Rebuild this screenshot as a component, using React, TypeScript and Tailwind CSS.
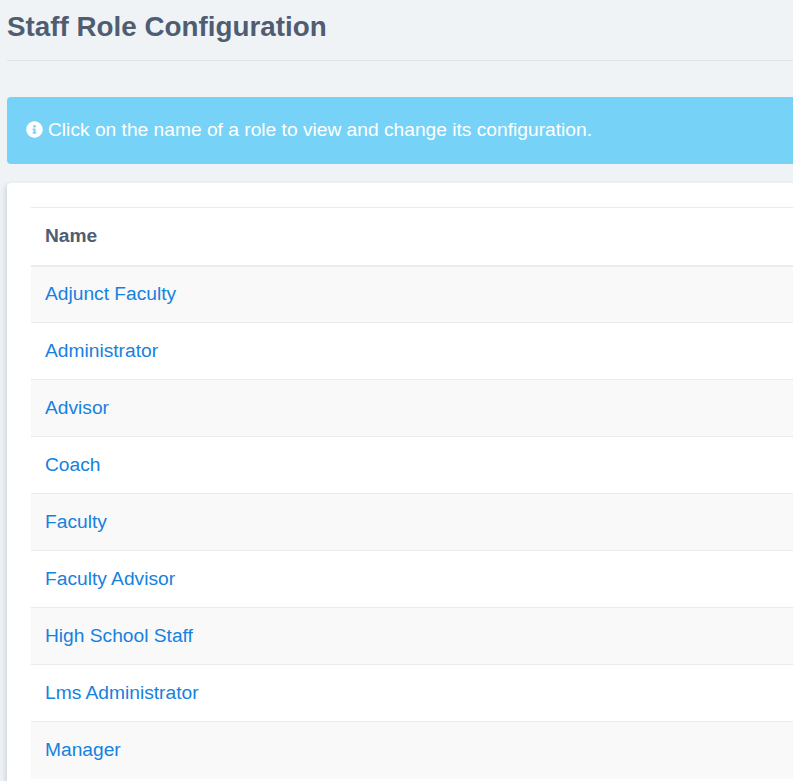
const roles = ['Adjunct Faculty', 'Administrator', 'Advisor', 'Coach', 'Faculty', 'Faculty Advisor', 'High School Staff', 'Lms Administrator', 'Manager'];

function InfoIcon() {
    return (
        <svg viewBox="0 0 512 512" className="inline-block w-[17px] h-[17px] mr-[5px] align-[-2px]" fill="currentColor">
            <path d="M256 8C119 8 8 119 8 256s111 248 248 248 248-111 248-248S393 8 256 8zm0 110a42 42 0 1 1 0 84 42 42 0 0 1 0-84zm56 254c0 7-5 12-12 12h-88c-7 0-12-5-12-12v-24c0-7 5-12 12-12h12v-64h-12c-7 0-12-5-12-12v-24c0-7 5-12 12-12h64c7 0 12 5 12 12v100h12c7 0 12 5 12 12v24z" />
        </svg>
    );
}

export default function App() {
    return (
        <div className="w-[793px] h-[781px] overflow-hidden bg-[#eff3f6] font-['Liberation_Sans',Arial,sans-serif] pl-[7px]">
            <div className="w-[900px]">
                <h1 className="pt-[12px] h-[61px] text-[27.8px] leading-[30px] font-bold text-[#4f5d73] border-b border-[#dfe3e7]">Staff Role Configuration</h1>
                <div className="mt-[36px] h-[67px] rounded-[4px] bg-[#76d3f7] text-white text-[19.2px] pl-[19px] leading-[65px]">
                    <InfoIcon />Click on the name of a role to view and change its configuration.
                </div>
                <div className="mt-[19px] bg-white rounded-[4px] pl-[24px] pt-[24px] pb-[24px] shadow-[-2px_2px_5px_rgba(80,100,130,0.2)]">
                    <table className="w-full border-collapse text-[19.2px]">
                        <thead>
                            <tr className="h-[58px] border-t border-b-2 border-[#e9ecef]">
                                <th className="text-left font-bold pl-[14px] text-[#4f5d73]">Name</th>
                            </tr>
                        </thead>
                        <tbody>
                            {roles.map((r, i) => (
                                <tr key={r} className={`h-[57px] border-b last:border-b-0 border-[#e9ecef] ${i % 2 === 0 ? 'bg-[#f9f9f9]' : 'bg-white'}`}>
                                    <td className="pl-[14px] text-[#1681de]">{r}</td>
                                </tr>
                            ))}
                        </tbody>
                    </table>
                </div>
            </div>
        </div>
    );
}
